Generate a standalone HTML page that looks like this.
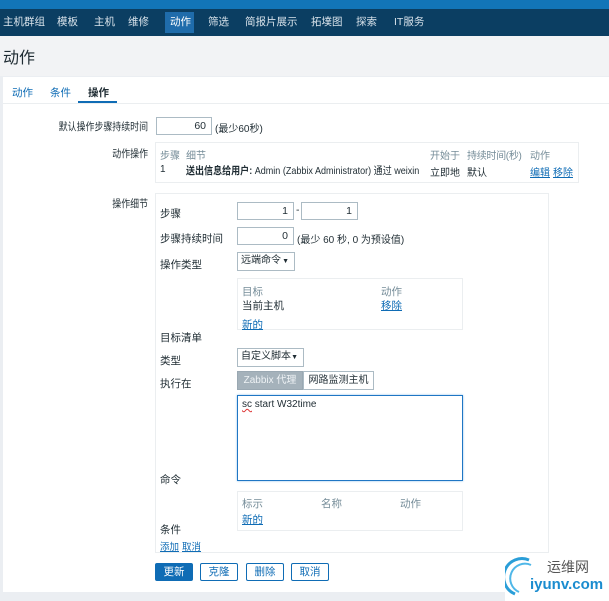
<!DOCTYPE html>
<html><head><meta charset="utf-8"><style>
*{margin:0;padding:0;box-sizing:border-box}
body{width:609px;height:601px;overflow:hidden;background:#ebeef2;font-family:"Liberation Sans","Noto Sans CJK SC",sans-serif;font-size:10.5px;color:#1f2c33;position:relative}
.a{position:absolute;white-space:nowrap}
.lk{color:#0f6cb5;text-decoration:underline}
.gr{color:#768d99}
.inp{position:absolute;background:#fff;border:1px solid #acbbc4;text-align:right;padding-right:5px;line-height:16px}
.box{position:absolute;border:1px solid #ebeef0;background:#fff}
.btn{position:absolute;border:1px solid #0f6cb5;background:#fff;color:#0f6cb5;text-align:center;line-height:16px;border-radius:2px}
.tl{font-size:10.5px;transform:scaleX(0.85);transform-origin:right center}
.ar{font-size:7px;position:absolute;right:5px;top:1px}
</style></head><body>
<div class="a" style="left:0;top:0;width:609px;height:9px;background:#1275b8"></div>
<div class="a" style="left:0;top:9px;width:609px;height:27px;background:#0b3e62"></div>
<div class="a" style="left:165px;top:12px;width:29px;height:21px;background:#1f6cab"></div>
<div class="a" style="left:0;top:9px;height:27px;line-height:27px;color:#d8e2ea;font-size:10.5px">
<span class="a" style="left:3px">主机群组</span><span class="a" style="left:57px">模板</span><span class="a" style="left:94px">主机</span><span class="a" style="left:128px">维修</span><span class="a" style="left:170px;color:#fff">动作</span><span class="a" style="left:208px">筛选</span><span class="a" style="left:245px">简报片展示</span><span class="a" style="left:311px">拓墣图</span><span class="a" style="left:356px">探索</span><span class="a" style="left:394px">IT服务</span></div>
<div class="a" style="left:0;top:36px;width:609px;height:40px;background:#f2f3f5"></div>
<div class="a" style="left:3px;top:44px;font-size:16px;color:#1f2c33">动作</div>
<div class="a" style="left:3px;top:77px;width:606px;height:515px;background:#fff"></div>
<div class="a" style="left:3px;top:103px;width:606px;height:1px;background:#ebeef0"></div>
<div class="a lk" style="left:12px;top:85px;text-decoration:none">动作</div>
<div class="a lk" style="left:50px;top:85px;text-decoration:none">条件</div>
<div class="a" style="left:88px;top:85px;font-weight:bold">操作</div>
<div class="a" style="left:78px;top:101px;width:39px;height:2px;background:#0f6cb5"></div>

<div class="a tl" style="right:461px;top:119px">默认操作步骤持续时间</div>
<div class="inp" style="left:156px;top:117px;width:56px;height:18px">60</div>
<div class="a" style="left:215px;top:120px;font-size:10px">(最少60秒)</div>

<div class="a tl" style="right:461px;top:146px">动作操作</div>
<div class="box" style="left:155px;top:142px;width:424px;height:41px"></div>
<div style="font-size:10px">
<div class="a gr" style="left:160px;top:147px">步骤</div><div class="a gr" style="left:186px;top:147px">细节</div>
<div class="a gr" style="left:430px;top:147px">开始于</div><div class="a gr" style="left:467px;top:147px;letter-spacing:-0.3px">持续时间(秒)</div><div class="a gr" style="left:530px;top:147px">动作</div>
<div class="a" style="left:160px;top:164px">1</div>
<div class="a" style="left:186px;top:163px;font-size:10.5px;transform:scaleX(0.86);transform-origin:left center"><b>送出信息给用户:</b> Admin (Zabbix Administrator) 通过 weixin</div>
<div class="a" style="left:430px;top:164px">立即地</div><div class="a" style="left:467px;top:164px">默认</div>
<div class="a lk" style="left:530px;top:164px">编辑</div><div class="a lk" style="left:553px;top:164px">移除</div>
</div>

<div class="a tl" style="right:461px;top:196px">操作细节</div>
<div class="box" style="left:155px;top:193px;width:394px;height:360px"></div>
<div class="a" style="left:160px;top:206px">步骤</div>
<div class="inp" style="left:237px;top:202px;width:57px;height:18px">1</div>
<div class="a" style="left:296px;top:204px">-</div>
<div class="inp" style="left:301px;top:202px;width:57px;height:18px">1</div>
<div class="a" style="left:160px;top:231px">步骤持续时间</div>
<div class="inp" style="left:237px;top:227px;width:57px;height:18px">0</div>
<div class="a" style="left:297px;top:231px;font-size:10px">(最少 60 秒, 0 为预设值)</div>
<div class="a" style="left:160px;top:257px">操作类型</div>
<div class="inp" style="left:237px;top:252px;width:58px;height:19px;text-align:left;padding-left:3px;font-size:10px">远端命令<span class="ar">▼</span></div>
<div class="box" style="left:237px;top:278px;width:226px;height:52px"></div>
<div class="a gr" style="left:242px;top:284px">目标</div><div class="a gr" style="left:381px;top:284px">动作</div>
<div class="a" style="left:242px;top:298px">当前主机</div><div class="a lk" style="left:381px;top:298px">移除</div>
<div class="a lk" style="left:242px;top:317px">新的</div>
<div class="a" style="left:160px;top:330px">目标清单</div>
<div class="a" style="left:160px;top:353px">类型</div>
<div class="inp" style="left:237px;top:348px;width:67px;height:19px;text-align:left;padding-left:3px;font-size:10px">自定义脚本<span class="ar">▼</span></div>
<div class="a" style="left:160px;top:376px">执行在</div>
<div class="a" style="left:237px;top:371px;width:66px;height:19px;background:#a5b2bb;color:#eef2f5;text-align:center;line-height:17px;border:1px solid #9aa8b2;font-size:10px">Zabbix 代理</div>
<div class="a" style="left:303px;top:371px;width:71px;height:19px;border:1px solid #acbbc4;text-align:center;line-height:17px;font-size:10px">网路监测主机</div>
<div class="a" style="left:237px;top:395px;width:226px;height:86px;border:1px solid #1f76c4;box-shadow:0 0 2px #8cc0ea"></div>
<div class="a" style="left:242px;top:399px;font-size:10px"><span style="text-decoration:underline wavy #d33">sc</span> start W32time</div>
<div class="a" style="left:160px;top:472px">命令</div>
<div class="box" style="left:237px;top:491px;width:226px;height:40px"></div>
<div class="a gr" style="left:242px;top:496px">标示</div><div class="a gr" style="left:321px;top:496px">名称</div><div class="a gr" style="left:400px;top:496px">动作</div>
<div class="a lk" style="left:242px;top:512px">新的</div>
<div class="a" style="left:160px;top:522px">条件</div>
<div class="a lk" style="left:160px;top:539px;font-size:9.5px">添加</div><div class="a lk" style="left:182px;top:539px;font-size:9.5px">取消</div>

<div class="btn" style="left:155px;top:563px;width:38px;height:18px;background:#0f6cb5;color:#fff">更新</div>
<div class="btn" style="left:200px;top:563px;width:38px;height:18px">克隆</div>
<div class="btn" style="left:246px;top:563px;width:38px;height:18px">删除</div>
<div class="btn" style="left:291px;top:563px;width:38px;height:18px">取消</div>

<div class="a" style="left:505px;top:556px;width:104px;height:45px;background:#fff;border-radius:14px 0 0 0"></div>
<svg class="a" style="left:505px;top:556px" width="30" height="42" viewBox="0 0 30 42"><path d="M24 4 A18 18 0 0 0 10 38" fill="none" stroke="#2a9ed8" stroke-width="3"/><path d="M26 9 A14 14 0 0 0 14 36" fill="none" stroke="#4fb7e8" stroke-width="2"/></svg>
<div class="a" style="left:547px;top:557px;font-size:14px;color:#555">运维网</div>
<div class="a" style="left:530px;top:576px;font-size:15px;color:#1a8ccf;font-weight:bold">iyunv.com</div>
</body></html>
